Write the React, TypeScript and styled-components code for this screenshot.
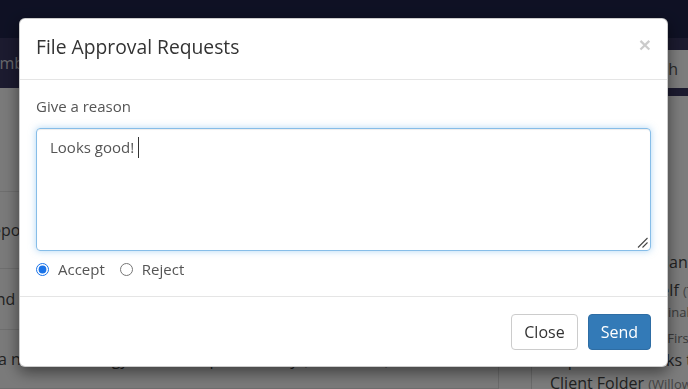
import React from "react";
import styled, { createGlobalStyle } from "styled-components";

const Global = createGlobalStyle`
  html, body { margin: 0; padding: 0; }
  body {
    font-family: "Open Sans", "Liberation Sans", sans-serif;
    background: #f2f2f2;
    width: 688px;
    height: 389px;
    overflow: hidden;
  }
  * { box-sizing: border-box; }
`;

const Page = styled.div`
  width: 688px;
  height: 389px;
  display: flex;
  flex-direction: column;
  overflow: hidden;
`;

const TopBar = styled.div`
  height: 38px;
  background: #1e2349;
  flex-shrink: 0;
`;

const NavBar = styled.div`
  height: 50px;
  background: #38365f;
  display: flex;
  align-items: center;
  justify-content: space-between;
  flex-shrink: 0;
  color: #d0d0d8;
  font-size: 16px;
`;

const NavItem = styled.div`
  margin-left: -24px;
`;

const NavButton = styled.div`
  height: 38px;
  margin-top: 12px;
  align-self: flex-start;
  background: #fafafa;
  color: #555;
  display: flex;
  align-items: center;
  padding: 0 12px;
  margin-right: -2px;
`;

const Content = styled.div`
  flex: 1;
  display: grid;
  grid-template-columns: 498px 33px 1fr;
`;

const LeftCol = styled.div`
  display: flex;
  flex-direction: column;
  background: #f4f4f4;
`;

const Row = styled.div<{ $h: number }>`
  height: ${(p) => p.$h}px;
  border-bottom: 1px solid #dcdcdc;
  display: flex;
  align-items: center;
  font-size: 16px;
  color: #444;
  white-space: nowrap;
`;

const RowText = styled.span<{ $shift: number }>`
  margin-left: ${(p) => p.$shift}px;
`;

const Gutter = styled.div`
  border-left: 1px solid #d6d6d6;
  background: #f4f4f4;
`;

const RightCol = styled.div`
  border-left: 1px solid #d6d6d6;
  background: #f8f8f8;
  display: flex;
  flex-direction: column;
`;

const RightStrip = styled.div`
  height: 8px;
  background: #38365f;
`;

const RightList = styled.div`
  padding: 155px 0 0 18px;
  display: flex;
  flex-direction: column;
  white-space: nowrap;
`;

const RightLine = styled.div<{ $mt: number; $indent: number; $small?: boolean }>`
  height: 22px;
  line-height: 22px;
  margin-top: ${(p) => p.$mt}px;
  padding-left: ${(p) => p.$indent}px;
  font-size: ${(p) => (p.$small ? 13 : 16)}px;
  color: ${(p) => (p.$small ? "#777" : "#444")};
`;

const Note = styled.span`
  font-size: 13px;
  color: #888;
`;

const Overlay = styled.div`
  position: fixed;
  inset: 0;
  background: rgba(0, 0, 0, 0.5);
`;

const Dialog = styled.div`
  position: fixed;
  top: 18px;
  left: 19px;
  width: 649px;
  background: #fff;
  border: 1px solid rgba(0, 0, 0, 0.2);
  border-radius: 6px;
  box-shadow: 0 5px 15px rgba(0, 0, 0, 0.5);
  display: flex;
  flex-direction: column;
  color: #555;
`;

const Header = styled.div`
  display: flex;
  justify-content: space-between;
  align-items: flex-start;
  padding: 14px 16px 18px 16px;
  border-bottom: 1px solid #e5e5e5;
`;

const Title = styled.h4`
  margin: 0;
  font-size: 19.3px;
  line-height: 28px;
  font-weight: 400;
  color: #333;
`;

const CloseX = styled.button`
  border: 0;
  background: transparent;
  padding: 0;
  font-family: "Liberation Sans", sans-serif;
  font-size: 21px;
  font-weight: 700;
  line-height: 1;
  margin-top: 1px;
  color: #000;
  opacity: 0.2;
`;

const Body = styled.div`
  padding: 16px 16px 17px 16px;
  display: flex;
  flex-direction: column;
`;

const Label = styled.div`
  font-size: 15px;
  line-height: 20px;
  color: #555;
  margin-bottom: 12px;
`;

const TextBox = styled.div`
  position: relative;
  height: 123px;
  border: 1px solid #86bde8;
  border-radius: 4px;
  padding: 8px 13px;
  font-size: 15px;
  line-height: 21px;
  color: #555;
  box-shadow: inset 0 1px 1px rgba(0, 0, 0, 0.075),
    0 0 7px rgba(102, 175, 233, 0.5);
`;

const Caret = styled.span`
  display: inline-block;
  width: 1px;
  height: 21px;
  background: #333;
  margin-left: 4px;
  vertical-align: top;
`;

const Grip = styled.svg`
  position: absolute;
  right: 2px;
  bottom: 2px;
`;

const Choices = styled.div`
  margin-top: 8px;
  display: flex;
  align-items: center;
  height: 20px;
  gap: 15px;
`;

const Choice = styled.label`
  display: flex;
  align-items: center;
  gap: 9px;
  font-size: 15px;
  color: #555;
`;

const Radio = styled.input`
  margin: 0;
  width: 13px;
  height: 13px;
  accent-color: #1a73e8;
`;

const Footer = styled.div`
  border-top: 1px solid #e5e5e5;
  padding: 17px 16px 16px 16px;
  display: flex;
  justify-content: flex-end;
  gap: 10px;
`;

const Button = styled.button<{ $primary?: boolean }>`
  height: 36px;
  padding: 0 12px;
  font-family: "Open Sans", "Liberation Sans", sans-serif;
  font-size: 16px;
  border-radius: 4px;
  border: 1px solid ${(p) => (p.$primary ? "#2e6da4" : "#ccc")};
  background: ${(p) => (p.$primary ? "#337ab7" : "#fff")};
  color: ${(p) => (p.$primary ? "#fff" : "#333")};
`;

export default function App() {
  return (
    <>
      <Global />
      <Page>
        <TopBar />
        <NavBar>
          <NavItem>Members</NavItem>
          <NavButton>Search</NavButton>
        </NavBar>
        <Content>
          <LeftCol>
            <Row $h={104}>
              <RowText $shift={40}>Recent requests</RowText>
            </Row>
            <Row $h={77}>
              <RowText $shift={-82}>Website Reports</RowText>
            </Row>
            <Row $h={61}>
              <RowText $shift={-30}>Brand Guidelines</RowText>
            </Row>
            <Row $h={59}>
              <RowText $shift={-40}>
                How a new technology can boost productivity (750 words) in Willowbend
              </RowText>
            </Row>
          </LeftCol>
          <Gutter />
          <RightCol>
            <RightStrip />
            <RightList>
              <RightLine $mt={0} $indent={8}>Social Media Plan</RightLine>
              <RightLine $mt={6} $indent={5}>
                Campaigns Shelf <Note>(Test)</Note>
              </RightLine>
              <RightLine $mt={0} $indent={12} $small>
                All Documents / Final
              </RightLine>
              <RightLine $mt={4} $indent={3} $small>
                Campaign Folder / First Draft
              </RightLine>
              <RightLine $mt={0} $indent={6}>Upload all Works to</RightLine>
              <RightLine $mt={1} $indent={0}>
                Client Folder <Note>(Willowbend)</Note>
              </RightLine>
            </RightList>
          </RightCol>
        </Content>
      </Page>
      <Overlay />
      <Dialog>
        <Header>
          <Title>File Approval Requests</Title>
          <CloseX aria-label="Close">×</CloseX>
        </Header>
        <Body>
          <Label>Give a reason</Label>
          <TextBox>
            Looks good!
            <Caret />
            <Grip width="11" height="11" viewBox="0 0 11 11">
              <line x1="1" y1="10.5" x2="10.5" y2="1" stroke="#444" strokeWidth="1.1" />
              <line x1="5.5" y1="10.5" x2="10.5" y2="5.5" stroke="#444" strokeWidth="1.1" />
            </Grip>
          </TextBox>
          <Choices>
            <Choice>
              <Radio type="radio" name="decision" defaultChecked />
              Accept
            </Choice>
            <Choice>
              <Radio type="radio" name="decision" />
              Reject
            </Choice>
          </Choices>
        </Body>
        <Footer>
          <Button>Close</Button>
          <Button $primary>Send</Button>
        </Footer>
      </Dialog>
    </>
  );
}
